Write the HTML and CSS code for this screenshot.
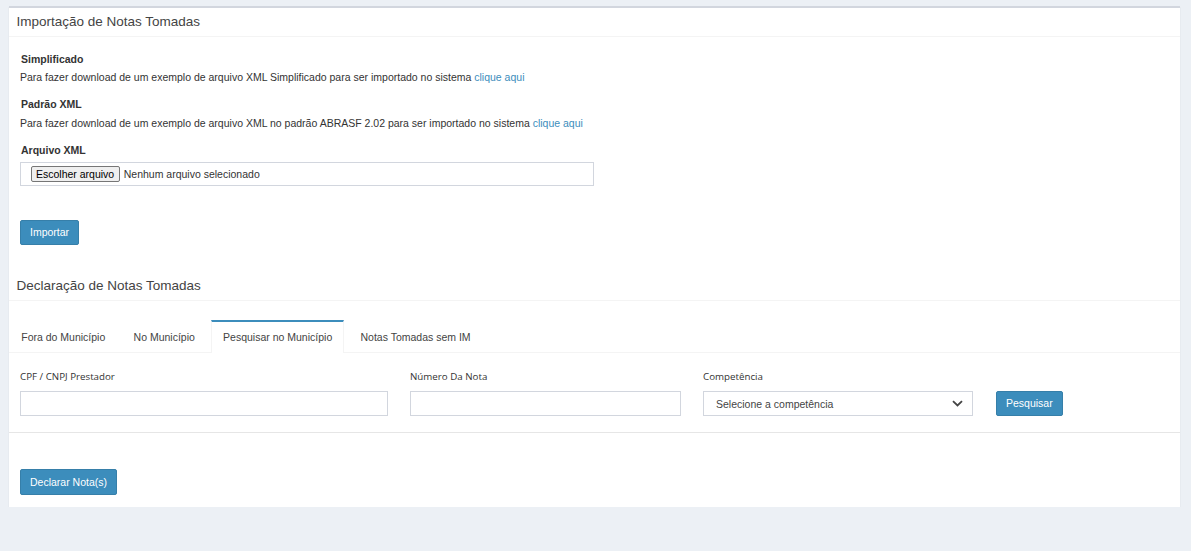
FILE: index.html
```html
<!DOCTYPE html>
<html lang="pt-BR">
<head>
<meta charset="utf-8">
<title>Notas Tomadas</title>
<link rel="stylesheet" href="styles.css">
</head>
<body>
<div class="wrapper">
  <div class="box">
    <div class="box-header"><h3 class="box-title">Importação de Notas Tomadas</h3></div>
    <div class="box-body">
      <label class="blabel">Simplificado</label>
      <p class="ptext">Para fazer download de um exemplo de arquivo XML Simplificado para ser importado no sistema <a class="link" href="#">clique aqui</a></p>
      <label class="blabel">Padrão XML</label>
      <p class="ptext">Para fazer download de um exemplo de arquivo XML no padrão ABRASF 2.02 para ser importado no sistema <a class="link" href="#">clique aqui</a></p>
      <label class="blabel">Arquivo XML</label>
      <div class="file-box"><span class="file-btn">Escolher arquivo</span><span class="file-name">Nenhum arquivo selecionado</span></div>
      <button class="btn btn-import">Importar</button>
    </div>
    <div class="box-header"><h3 class="box-title">Declaração de Notas Tomadas</h3></div>
    <ul class="tabs">
      <li class="tab">Fora do Município</li>
      <li class="tab">No Município</li>
      <li class="tab active">Pesquisar no Município</li>
      <li class="tab">Notas Tomadas sem IM</li>
    </ul>
    <div class="tab-pane">
      <div class="field f-cpf">
        <label class="flabel">CPF / CNPJ Prestador</label>
        <div class="input"></div>
      </div>
      <div class="field f-num">
        <label class="flabel">Número Da Nota</label>
        <div class="input"></div>
      </div>
      <div class="field f-comp">
        <label class="flabel">Competência</label>
        <div class="input select"><span>Selecione a competência</span>
          <svg class="chev" width="11" height="7" viewBox="0 0 11 7"><path d="M1 1.2 L5.5 5.5 L10 1.2" fill="none" stroke="#444" stroke-width="1.8"/></svg>
        </div>
      </div>
      <button class="btn btn-search">Pesquisar</button>
    </div>
    <div class="box-footer">
      <button class="btn btn-declare">Declarar Nota(s)</button>
    </div>
  </div>
</div>
</body>
</html>
```
FILE: styles.css
```css
html, body {
  margin: 0;
  padding: 0;
  background: #ecf0f5;
  font-family: "Liberation Sans", Arial, sans-serif;
  color: #333;
  font-size: 10.5px;
}
.wrapper {
  padding: 5.5px 11px 0 9px;
}
.box {
  background: #fff;
  border-top: 2px solid #d2d6de;
  box-shadow: 0 1px 1px rgba(0,0,0,0.12);
}
.box-header {
  padding: 7.5px 7.5px;
  border-bottom: 1px solid #f4f4f4;
}
.box-title {
  margin: 0;
  font-size: 13.5px;
  line-height: 13.5px;
  font-weight: normal;
  color: #444;
}
.box-body {
  padding: 14.5px 11px 26.5px 11px;
}
.blabel {
  display: block;
  font-weight: bold;
  line-height: 15px;
  margin: 0 0 3.5px 1px;
}
.ptext {
  margin: 0 0 12px 0;
  line-height: 15px;
}
.link {
  color: #3c8dbc;
  text-decoration: none;
}
.file-box {
  margin-top: 4px;
  width: 574px;
  height: 24px;
  box-sizing: border-box;
  border: 1px solid #d2d6de;
  display: flex;
  align-items: center;
  padding-left: 9.5px;
  font-size: 10.5px;
}
.file-btn {
  display: inline-block;
  height: 16px;
  line-height: 14px;
  box-sizing: border-box;
  padding: 0 4.5px;
  border: 1px solid #767676;
  border-radius: 2px;
  background: #efefef;
  color: #000;
  white-space: nowrap;
}
.file-name {
  margin-left: 4px;
  color: #333;
  white-space: nowrap;
}
.btn {
  font-family: "Liberation Sans", Arial, sans-serif;
  font-size: 10.5px;
  color: #fff;
  background: #3c8dbc;
  border: 1px solid #367fa9;
  border-radius: 2px;
  height: 25.5px;
  padding: 0 9px;
  line-height: 23px;
  white-space: nowrap;
  cursor: pointer;
}
.btn-import {
  display: block;
  margin-top: 34px;
}
.tabs {
  list-style: none;
  margin: 18.5px 0 0 0;
  padding: 0;
  display: flex;
  border-bottom: 1px solid #f4f4f4;
}
.tab {
  border-top: 2.25px solid transparent;
  border-left: 1px solid transparent;
  border-right: 1px solid transparent;
  padding: 8.75px 11.25px 8px;
  line-height: 15px;
  margin-right: 3.75px;
  margin-bottom: -1px;
  color: #444;
}
.tab.active {
  border-top-color: #3c8dbc;
  border-left-color: #f4f4f4;
  border-right-color: #f4f4f4;
  background: #fff;
}
.tab-pane {
  display: flex;
  align-items: flex-end;
  gap: 22px;
  padding: 16px 11px 15.5px 11px;
  border-bottom: 1px solid #e6e6e6;
}
.field {
  display: flex;
  flex-direction: column;
}
.f-cpf { width: 368px; }
.f-num { width: 271px; }
.f-comp { width: 270px; }
.flabel {
  font-family: "Open Sans", sans-serif;
  font-size: 9.75px;
  line-height: 15px;
  margin-bottom: 6.5px;
  color: #333;
}
.input {
  height: 25.5px;
  box-sizing: border-box;
  border: 1px solid #d2d6de;
  background: #fff;
}
.select {
  display: flex;
  align-items: center;
  justify-content: space-between;
  padding: 0 9px 0 12px;
  font-size: 10.5px;
  color: #444;
}
.chev {
  display: block;
}
.btn-search {
  margin-left: 1px;
}
.box-footer {
  padding: 36.5px 11px 12px;
}
```
